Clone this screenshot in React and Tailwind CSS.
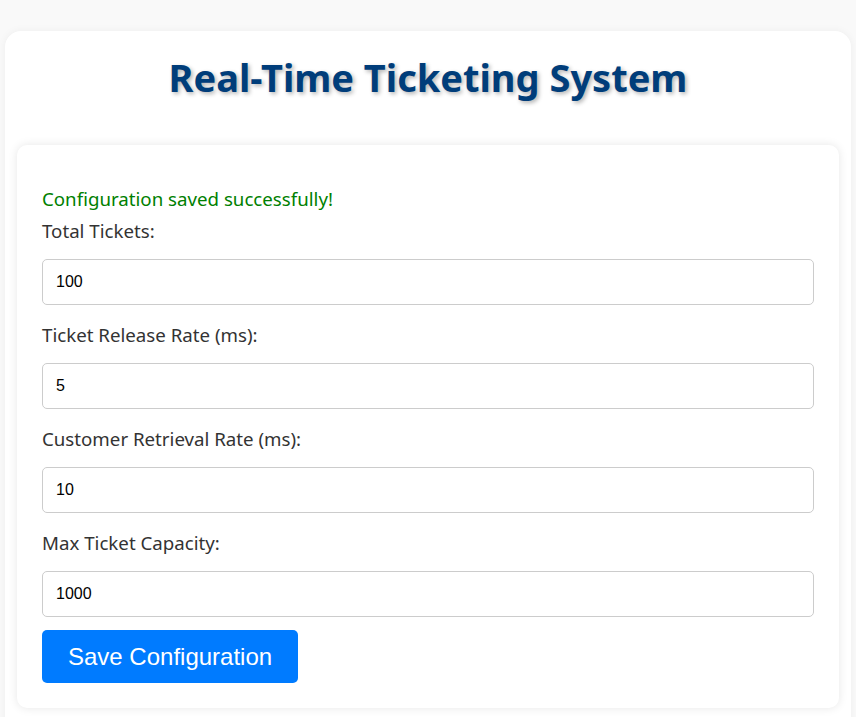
import React, { useState } from "react";

const fields = [
  { id: "totalTickets", label: "Total Tickets:", value: "100" },
  { id: "releaseRate", label: "Ticket Release Rate (ms):", value: "5" },
  { id: "retrievalRate", label: "Customer Retrieval Rate (ms):", value: "10" },
  { id: "maxCapacity", label: "Max Ticket Capacity:", value: "1000" },
];

export default function App() {
  const [config, setConfig] = useState(
    Object.fromEntries(fields.map((f) => [f.id, f.value]))
  );

  return (
    <div className="min-h-screen bg-[#f9f9f9] pt-[31px] px-[5px] font-['Noto_Sans',sans-serif]">
      {/* OUTER CARD */}
      <div className="bg-white rounded-2xl shadow-[0_0_8px_rgba(0,0,0,0.05)] px-3 pb-8 min-h-[720px]">
        <h1 className="pt-[23px] pb-[45px] text-center text-[38px] leading-[46px] font-bold text-[#003d7a] [text-shadow:2px_2px_4px_rgba(0,0,0,0.3)]">
          Real-Time Ticketing System
        </h1>

        {/* CONFIG FORM */}
        <div className="bg-white rounded-[10px] shadow-[0_0_10px_rgba(0,0,0,0.1)] p-[25px]">
          <p className="mt-[17px] mb-[8px] text-[18.7px] leading-[24px] text-[#008000]">
            Configuration saved successfully!
          </p>

          {fields.map((f, i) => (
            <div
              key={f.id}
              className={i === fields.length - 1 ? "mb-[13px]" : "mb-[18px]"}
            >
              <label
                htmlFor={f.id}
                className="block mb-[16px] text-[18.7px] leading-[24px] text-[#333]"
              >
                {f.label}
              </label>
              <input
                id={f.id}
                type="number"
                value={config[f.id]}
                onChange={(e) =>
                  setConfig({ ...config, [f.id]: e.target.value })
                }
                className="block w-full h-[46px] px-[13px] border border-[#ccc] rounded-[5px] text-[16px] text-black font-['Liberation_Sans',Arial,sans-serif] outline-none [appearance:textfield] [&::-webkit-inner-spin-button]:appearance-none"
              />
            </div>
          ))}

          <button className="h-[53px] px-[26px] rounded-[5px] bg-[#007bff] text-white text-[24px] font-['Liberation_Sans',Arial,sans-serif]">
            Save Configuration
          </button>
        </div>
      </div>
    </div>
  );
}
